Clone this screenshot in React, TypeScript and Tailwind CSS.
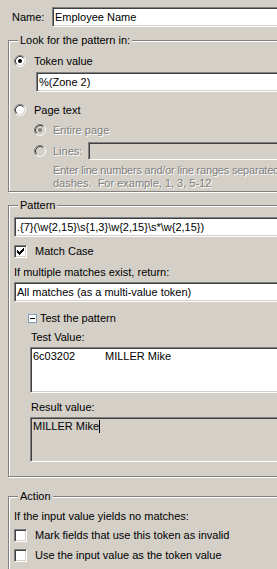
import React from 'react';

// Windows classic dialog: "Look for the pattern" token settings

const sunken =
  'border border-t-[#808080] border-l-[#808080] border-r-white border-b-white shadow-[inset_1px_1px_0_#404040,inset_-1px_-1px_0_#d4d0c8]';

const Edit: React.FC<{ className?: string; disabled?: boolean; top?: boolean; children?: React.ReactNode }> = ({
  className = '',
  disabled,
  top,
  children,
}) => (
  <div
    className={`flex ${top ? 'items-start pt-[2px]' : 'items-center'} pl-[2px] whitespace-pre ${sunken} ${
      disabled ? 'bg-[#d4d0c8]' : 'bg-white'
    } ${className}`}
  >
    {children}
  </div>
);

const Radio: React.FC<{ checked?: boolean; disabled?: boolean }> = ({ checked, disabled }) => (
  <svg width="12" height="12" viewBox="0 0 12 12" className="shrink-0">
    <circle cx="6" cy="6" r="4.5" fill={disabled ? '#d4d0c8' : '#fff'} />
    <path d="M2.11 9.89 A5.5 5.5 0 0 1 9.89 2.11" fill="none" stroke="#808080" />
    <path d="M9.89 2.11 A5.5 5.5 0 0 1 2.11 9.89" fill="none" stroke="#fff" />
    <path d="M2.82 9.18 A4.5 4.5 0 0 1 9.18 2.82" fill="none" stroke="#404040" />
    <path d="M9.18 2.82 A4.5 4.5 0 0 1 2.82 9.18" fill="none" stroke="#d4d0c8" />
    {checked && <circle cx="6" cy="6" r="2" fill={disabled ? '#808080' : '#000'} />}
  </svg>
);

const Check: React.FC<{ checked?: boolean }> = ({ checked }) => (
  <div className={`w-[13px] h-[13px] shrink-0 bg-white ${sunken}`}>
    {checked && (
      <svg width="11" height="11" viewBox="0 0 11 11">
        {[2, 3, 4, 3, 2, 1, 0].map((r, c) => (
          <rect key={c} x={2 + c} y={2 + r} width="1" height="3" fill="#000" />
        ))}
      </svg>
    )}
  </div>
);

const Dim: React.FC<{ className?: string; children: React.ReactNode }> = ({ className = '', children }) => (
  <span className={`text-[#808080] [text-shadow:1px_1px_0_#fff] whitespace-pre ${className}`}>{children}</span>
);

const Group: React.FC<{ title: string; className?: string; children: React.ReactNode }> = ({
  title,
  className = '',
  children,
}) => (
  <div className={`relative ml-[8px] border border-[#808080] shadow-[inset_1px_1px_0_#fff,1px_1px_0_#fff] ${className}`}>
    <span className="absolute left-[9px] top-[-7px] bg-[#d4d0c8] px-[2px]">{title}</span>
    {children}
  </div>
);

export default function App() {
  return (
    <div className="w-[277px] h-[569px] overflow-hidden bg-[#d4d0c8] text-black text-[11px] leading-[13px] font-['Liberation_Sans',Arial,sans-serif]">
      <div className="w-[330px]">
        <div className="flex items-center pt-[7px]">
          <span className="pl-[12px] w-[52px]">Name:</span>
          <Edit className="h-[20px] flex-1">Employee Name</Edit>
        </div>

        <Group title="Look for the pattern in:" className="mt-[13px] pl-[5px] pt-[13px] pb-[1px]">
          <div className="flex items-center h-[14px] gap-[8px]">
            <Radio checked />
            <span>Token value</span>
          </div>
          <Edit className="ml-[22px] mt-[4px] h-[20px]">%(Zone 2)</Edit>
          <div className="flex items-center h-[14px] gap-[8px] mt-[11px]">
            <Radio />
            <span>Page text</span>
          </div>
          <div className="flex items-center h-[14px] gap-[7px] mt-[6px] ml-[20px]">
            <Radio checked disabled />
            <Dim>Entire page</Dim>
          </div>
          <div className="flex items-center h-[18px] mt-[5px] ml-[20px]">
            <Radio disabled />
            <Dim className="ml-[7px] w-[35px]">Lines:</Dim>
            <Edit disabled className="h-[18px] flex-1" />
          </div>
          <div className="ml-[39px] mt-[4px] flex flex-col">
            <Dim className="tracking-[-0.2px]">Enter line numbers and/or line ranges separated</Dim>
            <Dim>dashes.  For example, 1, 3, 5-12</Dim>
          </div>
        </Group>

        <Group title="Pattern" className="mt-[13px] pl-[5px] pt-[11px] pb-[14px]">
          <Edit className="h-[20px]">{'.{7}(\\w{2,15}\\s{1,3}\\w{2,15}\\s*\\w{2,15})'}</Edit>
          <div className="flex items-center gap-[8px] mt-[8px] h-[13px]">
            <Check checked />
            <span>Match Case</span>
          </div>
          <div className="mt-[8px]">If multiple matches exist, return:</div>
          <Edit className="mt-[3px] h-[20px]">All matches (as a multi-value token)</Edit>
          <div className="ml-[14px] mt-[10px] flex items-center gap-[3px] h-[13px]">
            <div className="w-[9px] h-[9px] border border-[#7f9db9] bg-white flex items-center justify-center">
              <div className="w-[5px] h-[1px] bg-black" />
            </div>
            <span>Test the pattern</span>
          </div>
          <div className="ml-[17px] mt-[6px]">Test Value:</div>
          <Edit top className="ml-[16px] mt-[3px] h-[46px]">
            <span className="w-[72px]">6c03202</span>
            <span>MILLER Mike</span>
          </Edit>
          <div className="ml-[17px] mt-[8px]">Result value:</div>
          <Edit top disabled className="ml-[16px] mt-[3px] h-[45px]">
            <span>MILLER Mike</span>
            <span className="w-[1px] h-[13px] bg-black" />
          </Edit>
        </Group>

        <Group title="Action" className="mt-[19px] pl-[5px] pt-[13px] h-[100px]">
          <div>If the input value yields no matches:</div>
          <div className="flex items-center gap-[8px] mt-[6px] h-[13px]">
            <Check />
            <span>Mark fields that use this token as invalid</span>
          </div>
          <div className="flex items-center gap-[8px] mt-[7px] h-[13px]">
            <Check />
            <span>Use the input value as the token value</span>
          </div>
        </Group>
      </div>
    </div>
  );
}
